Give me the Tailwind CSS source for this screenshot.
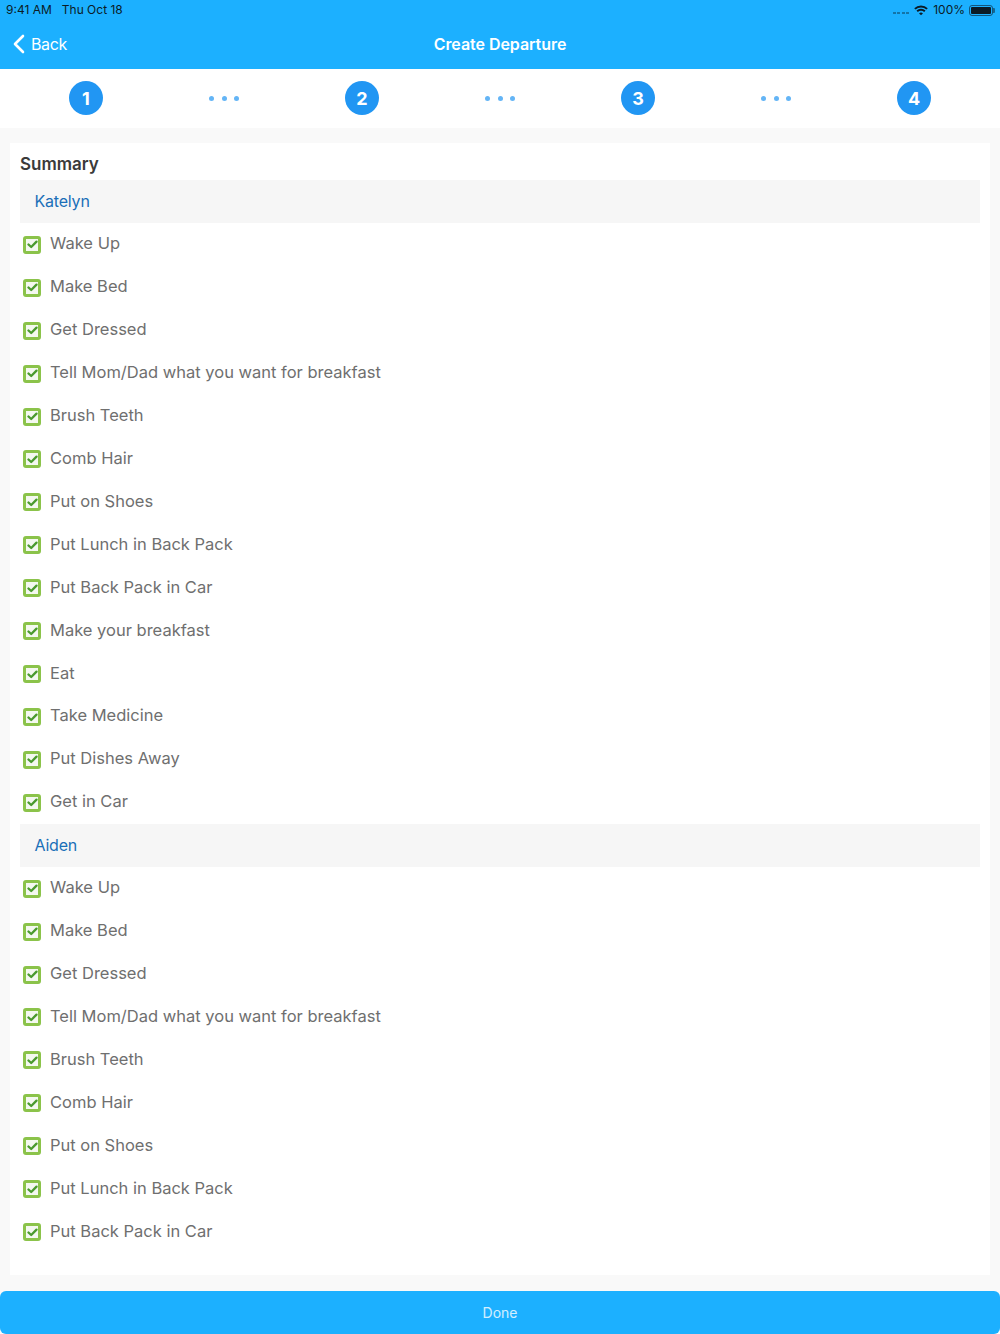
<!DOCTYPE html>
<html lang="en">
<head>
  <meta charset="UTF-8">
  <meta name="viewport" content="width=device-width, initial-scale=1.0">
  <title>Create Departure</title>
  <script src="https://cdn.jsdelivr.net/npm/@tailwindcss/browser@4"></script>
</head>
<body class="bg-[#f9f9f9] font-['Inter',sans-serif]">
  <div class="w-[1000px] h-[1334px] flex flex-col overflow-hidden">

    <!-- Status bar + nav -->
    <div class="bg-[#1cb0ff] h-[69px] shrink-0">
      <div class="h-[20px] flex items-center justify-between pl-[6px] pr-[7px] text-[12px] text-[#0b1b26]">
        <div class="flex gap-[10px]"><span>9:41 AM</span><span>Thu Oct 18</span></div>
        <div class="flex items-center gap-[4px]">
          <div class="flex gap-[1.5px] mr-[1px] mt-[5px]">
            <span class="w-[3px] h-[2px] bg-[#0b1b26]/40"></span>
            <span class="w-[3px] h-[2px] bg-[#0b1b26]/40"></span>
            <span class="w-[3px] h-[2px] bg-[#0b1b26]/40"></span>
            <span class="w-[3px] h-[2px] bg-[#0b1b26]/40"></span>
          </div>
          <svg width="14" height="11" viewBox="0 0 16 12" fill="none" stroke="#0b1b26" stroke-width="2.2">
            <path d="M1 4.2a10 10 0 0 1 14 0"/>
            <path d="M3.6 6.9a6.3 6.3 0 0 1 8.8 0"/>
            <path d="M8 11.5 5.8 9.3a3.1 3.1 0 0 1 4.4 0z" fill="#0b1b26" stroke="none"/>
          </svg>
          <span class="ml-[1px]">100%</span>
          <div class="w-[24px] h-[11px] rounded-[3px] border border-[#0b1b26]/60 p-[1px] relative">
            <div class="w-full h-full rounded-[1px] bg-[#0b1b26]"></div>
            <span class="absolute right-[-3px] top-[2px] w-[2px] h-[5px] rounded-r-[1px] bg-[#0b1b26]/50"></span>
          </div>
        </div>
      </div>
      <div class="h-[49px] pb-[2px] relative flex items-center justify-center">
        <div class="absolute left-[12px] top-0 h-[47px] flex items-center gap-[5px] text-white text-[16px] tracking-[-0.4px]">
          <svg width="14" height="20" viewBox="0 0 14 20" fill="none" stroke="white" stroke-width="2.6" stroke-linecap="round" stroke-linejoin="round">
            <path d="M11 2 3 10l8 8"/>
          </svg>
          <span>Back</span>
        </div>
        <span class="text-white text-[16px] tracking-[-0.05px] font-semibold">Create Departure</span>
      </div>
    </div>

    <!-- Stepper -->
    <div class="bg-white h-[59px] pb-[1px] shrink-0 grid grid-cols-7 items-center px-[17px]">
      <div class="flex justify-center"><div class="w-[34px] h-[34px] rounded-full bg-[#2196f3] text-white font-bold text-[18px] flex items-center justify-center">1</div></div>
      <div class="flex justify-center gap-[7.3px]"><i class="w-[5px] h-[5px] rounded-full bg-[#64b5f6]"></i><i class="w-[5px] h-[5px] rounded-full bg-[#64b5f6]"></i><i class="w-[5px] h-[5px] rounded-full bg-[#64b5f6]"></i></div>
      <div class="flex justify-center"><div class="w-[34px] h-[34px] rounded-full bg-[#2196f3] text-white font-bold text-[18px] flex items-center justify-center">2</div></div>
      <div class="flex justify-center gap-[7.3px]"><i class="w-[5px] h-[5px] rounded-full bg-[#64b5f6]"></i><i class="w-[5px] h-[5px] rounded-full bg-[#64b5f6]"></i><i class="w-[5px] h-[5px] rounded-full bg-[#64b5f6]"></i></div>
      <div class="flex justify-center"><div class="w-[34px] h-[34px] rounded-full bg-[#2196f3] text-white font-bold text-[18px] flex items-center justify-center">3</div></div>
      <div class="flex justify-center gap-[7.3px]"><i class="w-[5px] h-[5px] rounded-full bg-[#64b5f6]"></i><i class="w-[5px] h-[5px] rounded-full bg-[#64b5f6]"></i><i class="w-[5px] h-[5px] rounded-full bg-[#64b5f6]"></i></div>
      <div class="flex justify-center"><div class="w-[34px] h-[34px] rounded-full bg-[#2196f3] text-white font-bold text-[18px] flex items-center justify-center">4</div></div>
    </div>

    <!-- Summary card -->
    <div class="mx-[10px] mt-[15px] h-[1132px] shrink-0 bg-white px-[10px]">
      <div class="h-[37px] pt-[9px] text-[17px] leading-[24px] font-semibold text-[#3a3a3a]">Summary</div>
      <div id="list"></div>
    </div>

    <!-- Done -->
    <div class="mt-[16px] h-[43px] shrink-0 bg-[#1cb0ff] rounded-[6px] flex items-center justify-center text-[14px] text-white/80">Done</div>
  </div>

  <script>
    const katelyn = ['Wake Up', 'Make Bed', 'Get Dressed', 'Tell Mom/Dad what you want for breakfast', 'Brush Teeth', 'Comb Hair', 'Put on Shoes', 'Put Lunch in Back Pack', 'Put Back Pack in Car', 'Make your breakfast', 'Eat', 'Take Medicine', 'Put Dishes Away', 'Get in Car'];
    const aiden = katelyn.slice(0, 9);

    function renderGroup(name, tasks) {
      let html = `<div class="h-[42.93px] bg-[#f6f6f6] flex items-center pl-[14.5px] pb-[1px] text-[16px] tracking-[-0.2px] text-[#1a6fb8]">${name}</div>`;
      tasks.forEach(task => {
        html += `
          <div class="h-[42.93px] flex items-center">
            <div class="w-[18px] h-[18px] ml-[3px] mt-[1px] rounded-[3px] border-[3px] border-[#8bc34a] bg-[#f4f8f0] flex items-center justify-center">
              <svg width="11" height="9" viewBox="0 0 11 9" fill="none" stroke="#4a9a2e" stroke-width="2.3" stroke-linecap="round" stroke-linejoin="round"><path d="M1.5 4.5 4.2 7 9.5 1.6"/></svg>
            </div>
            <span class="ml-[9px] mb-[1.4px] text-[16.5px] text-[#6f6f6f]">${task}</span>
          </div>`;
      });
      return html;
    }

    document.getElementById('list').innerHTML = renderGroup('Katelyn', katelyn) + renderGroup('Aiden', aiden);
  </script>
</body>
</html>
